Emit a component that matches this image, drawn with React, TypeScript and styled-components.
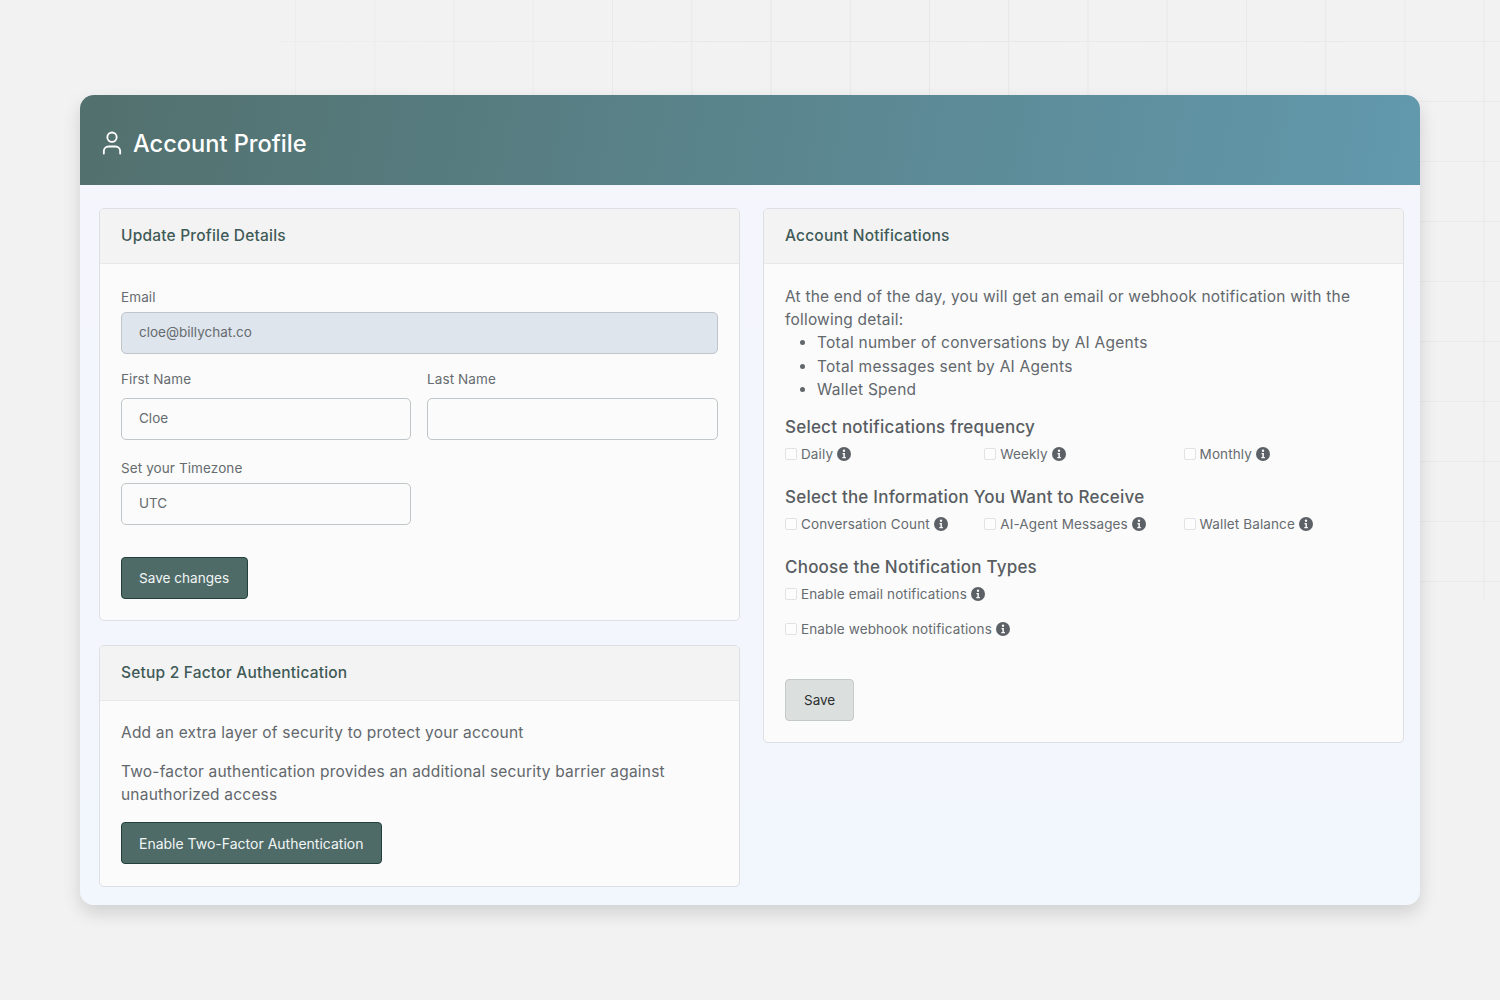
import React from 'react';
import styled, { createGlobalStyle } from 'styled-components';
import { User } from 'lucide-react';

const GlobalStyle = createGlobalStyle`
  html, body {
    margin: 0;
    height: 1000px;
    overflow: hidden;
  }
  body {
    font-family: 'Inter', 'Liberation Sans', sans-serif;
    background-color: #f2f2f2;
  }
`;

const Page = styled.div`
  position: relative;
  height: 1000px;
  box-sizing: border-box;
  padding: 95px 80px 0;
`;

const GridLines = styled.div`
  position: absolute;
  inset: 0 0 0 280px;
  background-image:
    linear-gradient(to right, #e6e6e6 1px, transparent 1px),
    linear-gradient(to bottom, #e7e7e7 1px, transparent 1px);
  background-size: 79.25px 60px;
  background-position: 15px 41px;
  -webkit-mask-image:
    linear-gradient(to bottom, #000 0, #000 60%, transparent 60%),
    linear-gradient(to right, rgba(0, 0, 0, 0.35) 0, #000 45%, rgba(0, 0, 0, 0.7) 100%);
  -webkit-mask-composite: source-in;
  mask-image:
    linear-gradient(to bottom, #000 0, #000 60%, transparent 60%),
    linear-gradient(to right, rgba(0, 0, 0, 0.35) 0, #000 45%, rgba(0, 0, 0, 0.7) 100%);
  mask-composite: intersect;
`;

const Shell = styled.div`
  position: relative;
  height: 810px;
  border-radius: 14px;
  background: linear-gradient(180deg, #f4f6fc 0%, #f2f6fd 100%);
  box-shadow: 0 8px 18px rgba(0, 0, 0, 0.14);
  overflow: hidden;
`;

const Banner = styled.header`
  height: 90px;
  box-sizing: border-box;
  padding: 6px 18px 0;
  display: flex;
  align-items: center;
  gap: 7px;
  color: #fff;
  background: linear-gradient(100deg, #52706d 0%, #6299ad 100%);
`;

const BannerTitle = styled.h1`
  margin: 0;
  font-size: 23.6px;
  font-weight: 500;
`;

const Columns = styled.div`
  display: grid;
  grid-template-columns: 641px 641px;
  gap: 23px;
  padding: 23px 16px 0 19px;
  align-items: start;
`;

const Stack = styled.div`
  display: flex;
  flex-direction: column;
  gap: 24px;
`;

const Card = styled.section`
  box-sizing: border-box;
  border: 1px solid #dcdfe3;
  border-radius: 5px;
  background: #fbfbfb;
  overflow: hidden;
`;

const CardHead = styled.div`
  height: 55px;
  box-sizing: border-box;
  padding: 0 21px 1px;
  display: flex;
  align-items: center;
  background: #f3f3f3;
  border-bottom: 1px solid #e8e8e8;
  color: #3f5a57;
  font-size: 15.5px;
  font-weight: 500;
  letter-spacing: 0.2px;
`;

const CardBody = styled.div<{ $pad: string }>`
  padding: ${({ $pad }) => $pad};
`;

const Label = styled.label<{ $gap?: number }>`
  display: block;
  color: #666b70;
  font-size: 13.5px;
  line-height: 18px;
  letter-spacing: 0.1px;
  margin-bottom: ${({ $gap }) => $gap ?? 6}px;
`;

const Input = styled.input<{ $disabled?: boolean }>`
  display: block;
  width: 100%;
  height: 42px;
  box-sizing: border-box;
  padding: 0 17px 2px;
  border: 1px solid #c0c5c9;
  border-radius: 5px;
  background: ${({ $disabled }) => ($disabled ? '#dfe5ec' : '#fbfbfb')};
  color: #666b70;
  font: inherit;
  font-size: 13.5px;
`;

const FieldRow = styled.div<{ $top: number }>`
  display: grid;
  grid-template-columns: 290px 291px;
  gap: 16px;
  margin-top: ${({ $top }) => $top}px;
`;

const Primary = styled.button<{ $top: number; $size: number }>`
  display: block;
  height: 42px;
  box-sizing: border-box;
  margin-top: ${({ $top }) => $top}px;
  padding: 0 18px 0 17px;
  border: 1px solid #23403d;
  border-radius: 4px;
  background: #4f6b68;
  color: #f1f6f5;
  font: inherit;
  font-size: ${({ $size }) => $size}px;
`;

const Secondary = styled.button`
  display: block;
  height: 42px;
  box-sizing: border-box;
  margin-top: 41px;
  padding: 0 18px;
  border: 1px solid #c4cac9;
  border-radius: 4px;
  background: #dbe0df;
  color: #2a2e30;
  font: inherit;
  font-size: 13.5px;
`;

const Copy = styled.p<{ $top?: number }>`
  margin: ${({ $top }) => $top ?? 0}px 0 0;
  color: #62676c;
  font-size: 15.5px;
  line-height: 23px;
  letter-spacing: 0.2px;
`;

const Bullets = styled.ul`
  margin: 0;
  padding: 0 0 0 32px;
  color: #62676c;
  font-size: 15.5px;
  line-height: 23.5px;
  letter-spacing: 0.25px;
`;

const SectionTitle = styled.h3<{ $top: number }>`
  margin: ${({ $top }) => $top}px 0 0;
  color: #585d62;
  font-size: 17px;
  line-height: 24px;
  font-weight: 500;
  letter-spacing: 0.22px;
`;

const OptionGrid = styled.div`
  display: grid;
  grid-template-columns: repeat(3, 199.3px);
  margin-top: 6px;
`;

const OptionList = styled.div`
  display: flex;
  flex-direction: column;
  gap: 17px;
  margin-top: 6px;
`;

const Option = styled.label`
  display: flex;
  align-items: center;
  height: 18px;
  color: #666b70;
  font-size: 13.5px;
  letter-spacing: 0.12px;
`;

const Box = styled.span`
  width: 10px;
  height: 10px;
  margin-right: 4px;
  border: 1px solid #e0e2e4;
  border-radius: 2px;
  background: #fdfdfd;
`;

const InfoMark = styled.svg`
  width: 14px;
  height: 14px;
  margin-left: 4px;
  flex: none;
`;

const Info = () => (
  <InfoMark viewBox="0 0 14 14">
    <circle cx="7" cy="7" r="7" fill="#5b6166" />
    <circle cx="7" cy="3.7" r="1.2" fill="#fbfbfb" />
    <path d="M5.5 6h2.4v4.1h1v1.2H5.3v-1.2h1.1V7.2h-.9z" fill="#fbfbfb" />
  </InfoMark>
);

const App: React.FC = () => {
  const frequency = ['Daily', 'Weekly', 'Monthly'];
  const information = ['Conversation Count', 'AI-Agent Messages', 'Wallet Balance'];

  return (
    <>
      <GlobalStyle />
      <Page>
        <GridLines />
        <Shell>
          <Banner>
            <User size={28} strokeWidth={1.6} />
            <BannerTitle>Account Profile</BannerTitle>
          </Banner>
          <Columns>
            <Stack>
              <Card>
                <CardHead>Update Profile Details</CardHead>
                <CardBody $pad="24px 21px 21px">
                  <Label>Email</Label>
                  <Input $disabled readOnly value="cloe@billychat.co" />
                  <FieldRow $top={16}>
                    <div>
                      <Label $gap={10}>First Name</Label>
                      <Input readOnly value="Cloe" />
                    </div>
                    <div>
                      <Label $gap={10}>Last Name</Label>
                      <Input readOnly value="" />
                    </div>
                  </FieldRow>
                  <FieldRow $top={19}>
                    <div>
                      <Label>Set your Timezone</Label>
                      <Input readOnly value="UTC" />
                    </div>
                  </FieldRow>
                  <Primary $top={32} $size={13.6}>Save changes</Primary>
                </CardBody>
              </Card>
              <Card>
                <CardHead>Setup 2 Factor Authentication</CardHead>
                <CardBody $pad="20px 21px 22px">
                  <Copy>Add an extra layer of security to protect your account</Copy>
                  <Copy $top={16}>
                    Two-factor authentication provides an additional security barrier against unauthorized access
                  </Copy>
                  <Primary $top={16} $size={14}>Enable Two-Factor Authentication</Primary>
                </CardBody>
              </Card>
            </Stack>
            <Card>
              <CardHead>Account Notifications</CardHead>
              <CardBody $pad="21px 21px 21px">
                <Copy>
                  At the end of the day, you will get an email or webhook notification with the following detail:
                </Copy>
                <Bullets>
                  <li>Total number of conversations by AI Agents</li>
                  <li>Total messages sent by AI Agents</li>
                  <li>Wallet Spend</li>
                </Bullets>
                <SectionTitle $top={13}>Select notifications frequency</SectionTitle>
                <OptionGrid>
                  {frequency.map((item) => (
                    <Option key={item}>
                      <Box />
                      {item}
                      <Info />
                    </Option>
                  ))}
                </OptionGrid>
                <SectionTitle $top={22}>Select the Information You Want to Receive</SectionTitle>
                <OptionGrid>
                  {information.map((item) => (
                    <Option key={item}>
                      <Box />
                      {item}
                      <Info />
                    </Option>
                  ))}
                </OptionGrid>
                <SectionTitle $top={22}>Choose the Notification Types</SectionTitle>
                <OptionList>
                  <Option>
                    <Box />
                    Enable email notifications
                    <Info />
                  </Option>
                  <Option>
                    <Box />
                    Enable webhook notifications
                    <Info />
                  </Option>
                </OptionList>
                <Secondary>Save</Secondary>
              </CardBody>
            </Card>
          </Columns>
        </Shell>
      </Page>
    </>
  );
};

export default App;
